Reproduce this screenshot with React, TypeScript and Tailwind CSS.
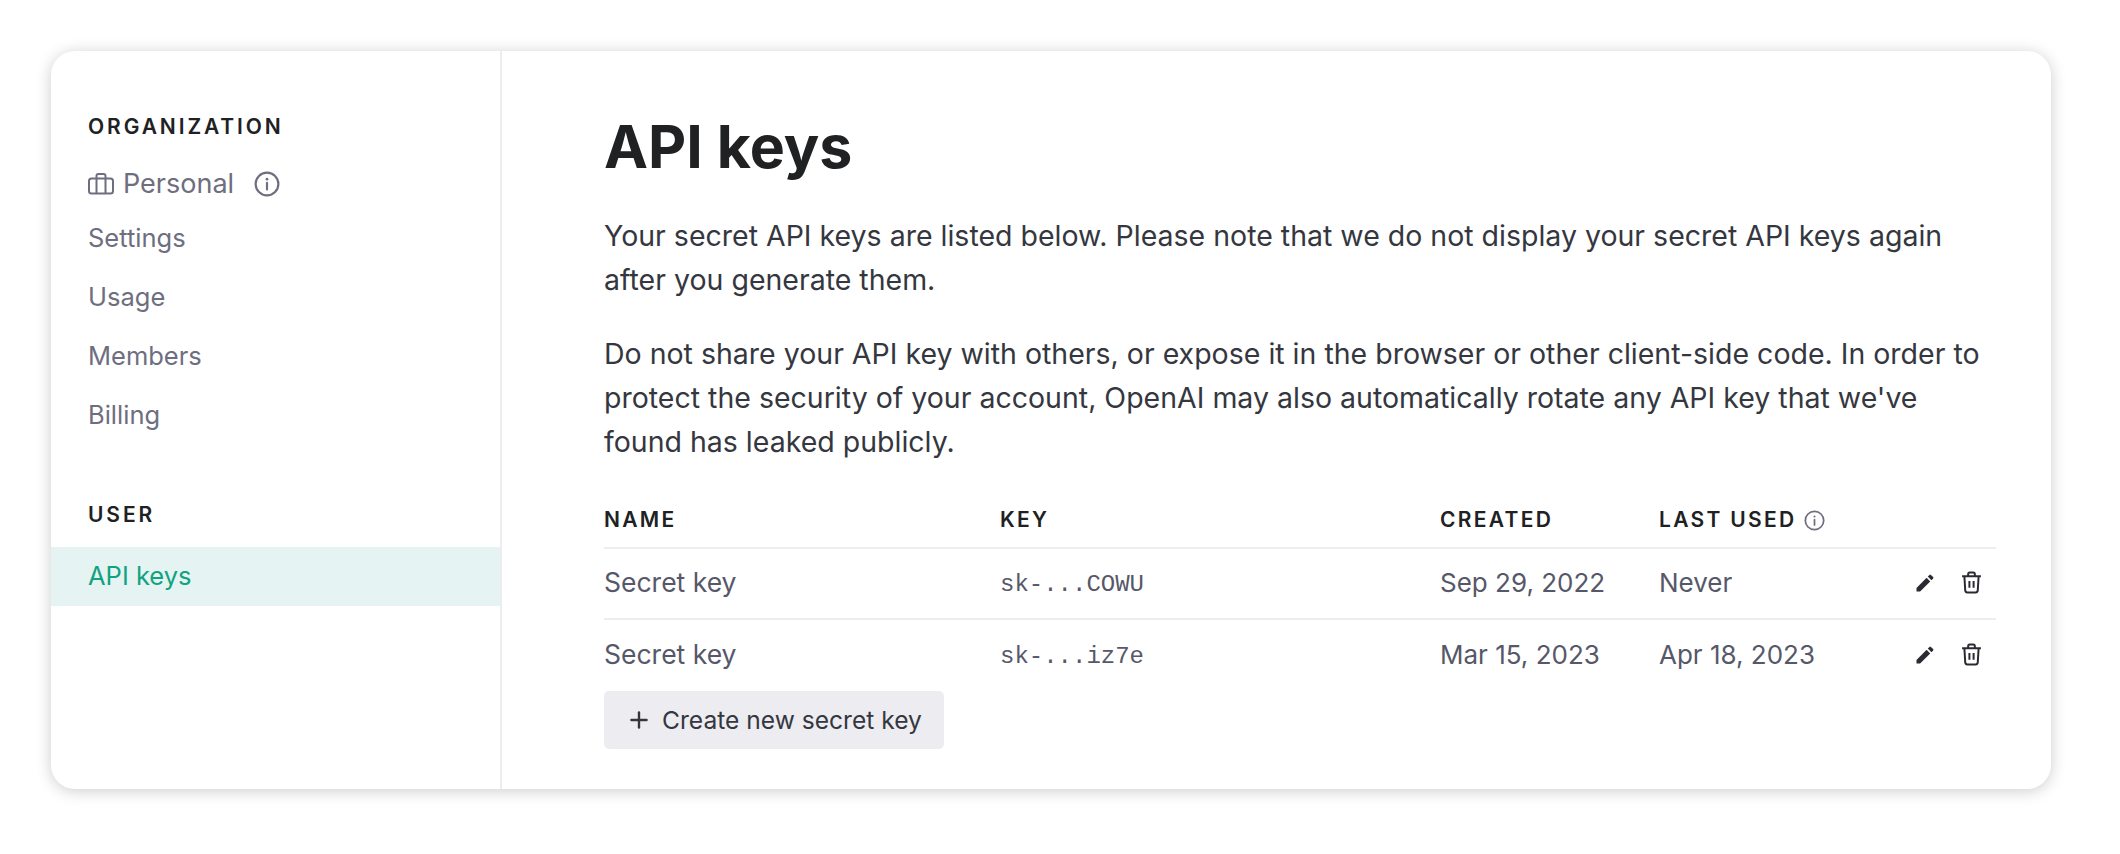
import React from "react";
import { Plus } from "lucide-react";

const InfoIcon = ({ className }: { className: string }) => (
  <svg viewBox="0 0 24 24" fill="none" stroke="currentColor" strokeWidth="2" className={className} aria-hidden="true">
    <circle cx="12" cy="12" r="10.500" />
    <path d="M12 11v6" strokeLinecap="round" />
    <circle cx="12" cy="7.500" r="1.200" fill="currentColor" stroke="none" />
  </svg>
);

const CaseIcon = () => (
  <svg viewBox="0 0 26 24" fill="none" stroke="currentColor" strokeWidth="2" className="h-6 w-[26px] text-[#6e6e80]" aria-hidden="true">
    <rect x="1" y="6.500" width="24" height="15" rx="2.500" />
    <path d="M8.500 6.500V4a2 2 0 0 1 2-2h5a2 2 0 0 1 2 2v2.500M8.500 6.500v15M17.500 6.500v15" />
  </svg>
);

const PencilIcon = () => (
  <svg viewBox="0 0 20 20" className="h-5 w-5 fill-[#2a2b32]" aria-hidden="true">
    <path d="M1.500 18.500v-3.600L11.600 4.800l3.600 3.600L5.100 18.500z" />
    <path d="M12.800 3.600l1.700-1.700a1 1 0 0 1 1.400 0l2.200 2.200a1 1 0 0 1 0 1.400l-1.700 1.700z" />
  </svg>
);

const TrashIcon = () => (
  <svg viewBox="0 0 20 22" fill="none" stroke="#2a2b32" strokeWidth="1.900" className="h-[23px] w-[21px]" aria-hidden="true">
    <path d="M1 5h18M3.200 5l.8 13.500A2 2 0 0 0 6 20.500h8a2 2 0 0 0 2-2L16.800 5M6.800 5V3a1.500 1.500 0 0 1 1.500-1.500h3.400A1.500 1.500 0 0 1 13.200 3v2M8 9.500v6.500M12 9.500v6.500" />
  </svg>
);

const heading = "text-[21px] leading-6 font-semibold tracking-[2.9px] text-[#202123]";
const navItem = "text-[25.5px] leading-[59px] text-[#6e6e80]";

const rows = [
  { name: "Secret key", key: "sk-...COWU", created: "Sep 29, 2022", used: "Never" },
  { name: "Secret key", key: "sk-...iz7e", created: "Mar 15, 2023", used: "Apr 18, 2023" },
];

export default function App() {
  return (
    <div className="h-[854px] w-[2120px] bg-white pt-[51px] pl-[51px] font-['Inter',sans-serif]">
      <div className="flex h-[738px] w-[2000px] rounded-[24px] bg-white shadow-[0_2px_16px_rgba(0,0,0,0.2)]">
        <aside className="w-[451px] shrink-0 border-r-2 border-[#ececf1] pt-[64px]">
          <div className="pl-[37px]">
            <h2 className={heading}>ORGANIZATION</h2>
            <div className="mt-[23px] flex h-[44px] items-center text-[27px] text-[#6e6e80]">
              <CaseIcon />
              <span className="ml-[9px]">Personal</span>
              <InfoIcon className="ml-5 h-[26px] w-[26px]" />
            </div>
            <ul className="mt-[2px]">
              <li className={navItem}>Settings</li>
              <li className={navItem}>Usage</li>
              <li className={navItem}>Members</li>
              <li className={navItem}>Billing</li>
            </ul>
            <h2 className={`${heading} mt-[59px]`}>USER</h2>
          </div>
          <div className="mt-[20px] flex h-[59px] items-center bg-[#e6f3f3] pl-[37px] text-[25.5px] text-[#10a37f]">API keys</div>
        </aside>
        <main className="min-w-0 flex-1 pt-[62px] pr-[55px] pl-[102px] text-[#353740]">
          <h1 className="text-[59px] leading-[68px] font-bold text-[#202123]">API keys</h1>
          <p className="mt-[33px] max-w-[1380px] text-[28.5px] leading-[44px]">
            Your secret API keys are listed below. Please note that we do not display your secret API keys again after you generate them.
          </p>
          <p className="mt-[30px] max-w-[1380px] text-[28.5px] leading-[44px]">
            Do not share your API key with others, or expose it in the browser or other client-side code. In order to protect the security of your account, OpenAI may also automatically rotate any API key that we've found has leaked publicly.
          </p>
          <div className="mt-[29px] grid h-[56px] grid-cols-[396px_440px_219px_1fr] items-center border-b-2 border-[#ececf1] text-[21px] font-semibold tracking-[2.3px] text-[#202123]">
            <span>NAME</span>
            <span>KEY</span>
            <span>CREATED</span>
            <span className="flex items-center gap-2">
              LAST USED
              <InfoIcon className="h-[21px] w-[21px] text-[#6e6e80]" />
            </span>
          </div>
          {rows.map((row, i) => (
            <div
              key={row.key}
              className={`grid h-[71px] grid-cols-[396px_440px_219px_208px_1fr] items-center pb-[2px] text-[26px] text-[#565869] ${i === 0 ? "border-b-2 border-[#ececf1]" : ""}`}
            >
              <span className="text-[26.5px]">{row.name}</span>
              <span className="mt-[5px] font-['Liberation_Mono',monospace] text-[24px]">{row.key}</span>
              <span>{row.created}</span>
              <span>{row.used}</span>
              <span className="flex items-center justify-end gap-[26px] pr-[14px]">
                <PencilIcon />
                <TrashIcon />
              </span>
            </div>
          ))}
          <button className="flex h-[58px] w-[340px] items-center gap-[10px] rounded-[5px] bg-[#ececf1] pl-[22px] text-[24.6px] text-[#353740]">
            <Plus className="h-[26px] w-[26px]" strokeWidth={2.2} />
            Create new secret key
          </button>
        </main>
      </div>
    </div>
  );
}
